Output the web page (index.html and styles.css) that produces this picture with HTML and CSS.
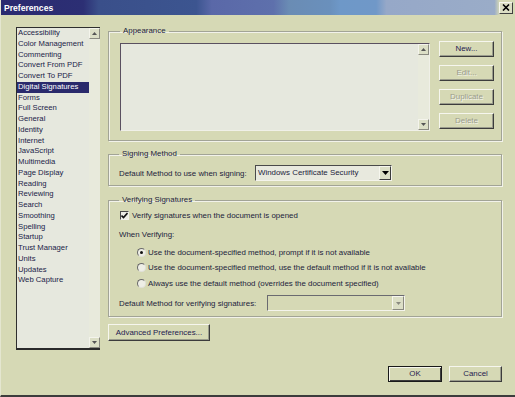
FILE: index.html
```html
<!DOCTYPE html>
<html>
<head>
<meta charset="utf-8">
<title>Preferences</title>
<link rel="stylesheet" href="styles.css">
</head>
<body>
<div class="window">
  <div class="titlebar">
    <span class="title">Preferences</span>
    <span class="close">
      <svg width="8" height="7" viewBox="0 0 8 7"><path d="M1 0.5 L7 6.5 M7 0.5 L1 6.5" stroke="#000" stroke-width="1.6"/></svg>
    </span>
  </div>
  <div class="main">
    <div class="catlist">
      <ul class="items">
        <li>Accessibility</li>
        <li>Color Management</li>
        <li>Commenting</li>
        <li>Convert From PDF</li>
        <li>Convert To PDF</li>
        <li class="selected">Digital Signatures</li>
        <li>Forms</li>
        <li>Full Screen</li>
        <li>General</li>
        <li>Identity</li>
        <li>Internet</li>
        <li>JavaScript</li>
        <li>Multimedia</li>
        <li>Page Display</li>
        <li>Reading</li>
        <li>Reviewing</li>
        <li>Search</li>
        <li>Smoothing</li>
        <li>Spelling</li>
        <li>Startup</li>
        <li>Trust Manager</li>
        <li>Units</li>
        <li>Updates</li>
        <li>Web Capture</li>
      </ul>
      <div class="vscroll">
        <span class="sarrow"><svg width="5" height="3" viewBox="0 0 5 3"><path d="M0 3 L2.5 0 L5 3 Z" fill="#555"/></svg></span>
        <span class="strack"></span>
        <span class="sarrow"><svg width="5" height="3" viewBox="0 0 5 3"><path d="M0 0 L2.5 3 L5 0 Z" fill="#555"/></svg></span>
      </div>
    </div>
    <div class="panel">
      <fieldset class="group appearance">
        <legend>Appearance</legend>
        <div class="app-row">
          <div class="app-list">
            <div class="app-scroll">
              <span class="sarrow"><svg width="5" height="3" viewBox="0 0 5 3"><path d="M0 3 L2.5 0 L5 3 Z" fill="#555"/></svg></span>
              <span class="strack"></span>
              <span class="sarrow"><svg width="5" height="3" viewBox="0 0 5 3"><path d="M0 0 L2.5 3 L5 0 Z" fill="#555"/></svg></span>
            </div>
          </div>
          <div class="app-buttons">
            <button class="btn">New...</button>
            <button class="btn disabled">Edit...</button>
            <button class="btn disabled">Duplicate</button>
            <button class="btn disabled">Delete</button>
          </div>
        </div>
      </fieldset>
      <fieldset class="group signing">
        <legend>Signing Method</legend>
        <div class="field-row">
          <span class="field-label sign-label">Default Method to use when signing:</span>
          <div class="combo sign-combo">
            <span class="combo-text">Windows Certificate Security</span>
            <span class="combo-btn"><svg width="7" height="4" viewBox="0 0 7 4"><path d="M0 0 L7 0 L3.5 4 Z" fill="#000"/></svg></span>
          </div>
        </div>
      </fieldset>
      <fieldset class="group verifying">
        <legend>Verifying Signatures</legend>
        <div class="check-row">
          <span class="checkbox"><svg width="7" height="7" viewBox="0 0 7 7"><path d="M0.5 3.5 L2.5 5.5 L6.5 1" stroke="#111" stroke-width="1.6" fill="none"/></svg></span>
          <span>Verify signatures when the document is opened</span>
        </div>
        <div class="when">When Verifying:</div>
        <div class="radios">
          <div class="radio-row"><span class="radio checked"></span><span>Use the document-specified method, prompt if it is not available</span></div>
          <div class="radio-row"><span class="radio"></span><span>Use the document-specified method, use the default method if it is not available</span></div>
          <div class="radio-row"><span class="radio"></span><span>Always use the default method (overrides the document specified)</span></div>
        </div>
        <div class="field-row verify-row">
          <span class="field-label verify-label">Default Method for verifying signatures:</span>
          <div class="combo verify-combo disabled">
            <span class="combo-text"></span>
            <span class="combo-btn"><svg width="5" height="3" viewBox="0 0 5 3"><path d="M0 0 L5 0 L2.5 3 Z" fill="#8a8a80"/></svg></span>
          </div>
        </div>
      </fieldset>
      <button class="btn adv">Advanced Preferences...</button>
    </div>
  </div>
  <div class="footer">
    <button class="btn ok">OK</button>
    <button class="btn cancel">Cancel</button>
  </div>
</div>
</body>
</html>
```

FILE: styles.css
```css
* { box-sizing: border-box; }

html, body {
  margin: 0;
  padding: 0;
}

body {
  background: #d6d9b5;
  font-family: "Liberation Sans", Arial, sans-serif;
  font-size: 7.9px;
  color: #1c1d3c;
}

.window {
  width: 515px;
  height: 397px;
  overflow: hidden;
  background: #d6d9b5;
  border-bottom: 2px solid #3c3c3c;
  border-left: 1px solid #e4e6d0;
}

.titlebar {
  height: 15px;
  display: flex;
  align-items: center;
  justify-content: space-between;
  padding: 0 2px 0 3px;
  background: linear-gradient(to right, #2a2a70 0%, #2c2f74 16%, #3a4f8a 19%, #3c5590 38%, #5a68a8 41%, #5e70ac 53%, #6a8cb4 56%, #6a90bc 64%, #6e98c8 66%, #7098c8 73%, #96a8c8 75%, #9aacc8 96%, #d6d9b5 97%);
}

.title {
  color: #ffffff;
  font-weight: bold;
  font-size: 8.6px;
}

.close {
  width: 14px;
  height: 12px;
  display: flex;
  align-items: center;
  justify-content: center;
  background: #dcdec4;
  border: 1px solid;
  border-color: #f6f6ee #404040 #404040 #f6f6ee;
}

.main {
  display: flex;
  gap: 8px;
  padding-left: 15px;
  margin-top: 12px;
}

.catlist {
  width: 84px;
  height: 323px;
  display: flex;
  border-top: 1px solid #2e2e2e;
  border-left: 1px solid #2e2e2e;
  border-bottom: 2px solid #2a2a2a;
}

.items {
  list-style: none;
  margin: 0;
  padding: 0;
  flex: 1;
  background: #e6e8de;
  color: #1a1c48;
  font-size: 7.7px;
}

.items li {
  height: 10.75px;
  line-height: 10.75px;
  padding-left: 1px;
  white-space: nowrap;
  overflow: hidden;
}

.items li.selected {
  background: #2a2a6c;
  color: #ffffff;
}

.vscroll, .app-scroll {
  width: 11px;
  display: flex;
  flex-direction: column;
  background-color: #e8eadc;
  background-image: radial-gradient(#c8cab0 0.6px, transparent 0.7px);
  background-size: 2px 2px;
}

.sarrow {
  height: 11px;
  display: flex;
  align-items: center;
  justify-content: center;
  background: #dcdfc6;
  border: 1px solid;
  border-color: #f4f4ec #8a8a80 #8a8a80 #f4f4ec;
}

.strack { flex: 1; }

.panel {
  width: 394px;
  margin-top: -1px;
  display: flex;
  flex-direction: column;
}

.group {
  margin: 0;
  border: 1px solid #a2a496;
  box-shadow: inset 1px 1px 0 #f2f2ea, 1px 1px 0 #f2f2ea;
  min-width: 0;
}

.group legend {
  padding: 0 3px;
  height: 10px;
  line-height: 10px;
  color: #1c1d3c;
}

.appearance {
  padding: 0 7px 9px 11px;
}

.app-row {
  display: flex;
  padding-top: 5px;
}

.app-list {
  width: 310px;
  height: 88px;
  margin-top: 2px;
  display: flex;
  justify-content: flex-end;
  background: #e6e8de;
  border-top: 1px solid #5a5060;
  border-left: 1px solid #5a5060;
  border-right: 1px solid #f0f0e8;
  border-bottom: 1px solid #f0f0e8;
}

.app-buttons {
  margin-left: 9px;
  width: 55px;
  display: flex;
  flex-direction: column;
  gap: 8px;
}

.btn {
  font-family: "Liberation Sans", Arial, sans-serif;
  font-size: 7.9px;
  color: #1f2050;
  background: #d6d9b5;
  border: 1px solid;
  border-color: #f6f6ee #3c3c3c #3c3c3c #f6f6ee;
  box-shadow: inset -1px -1px 0 #9a9c8c;
  height: 16px;
  padding: 0;
  margin: 0;
  line-height: 14px;
}

.btn.disabled {
  color: #9a9c8c;
  text-shadow: 1px 1px 0 #f2f2ea;
}

.signing {
  margin-top: 8px;
  padding: 6px 8px 4px 10px;
}

.field-row {
  display: flex;
  align-items: center;
}

.field-label {
  white-space: nowrap;
}

.sign-label { width: 136px; }

.combo {
  height: 16px;
  display: flex;
  align-items: stretch;
  background: #e8e9de;
  border: 1px solid;
  border-color: #4a4a4a #f4f4ec #f4f4ec #4a4a4a;
}

.sign-combo { width: 137px; }

.combo-text {
  flex: 1;
  padding-left: 2px;
  line-height: 14px;
  white-space: nowrap;
  overflow: hidden;
}

.combo-btn {
  width: 12px;
  display: flex;
  align-items: center;
  justify-content: center;
  background: #dcdfc6;
  border: 1px solid;
  border-color: #f6f6ee #3c3c3c #3c3c3c #f6f6ee;
}

.combo.disabled {
  background: #d6d9b5;
  border-color: #6a6a70 #f4f4ec #f4f4ec #6a6a70;
}

.combo.disabled .combo-btn {
  border-color: #f6f6ee #8a8a80 #8a8a80 #f6f6ee;
}

.verifying {
  margin-top: 9px;
  padding: 5px 8px 5px 10px;
}

.check-row {
  display: flex;
  align-items: center;
  height: 10px;
  gap: 3px;
  padding-left: 1px;
}

.checkbox {
  width: 9px;
  height: 9px;
  display: flex;
  align-items: center;
  justify-content: center;
  background: #eeeee6;
  border: 1px solid;
  border-color: #4a4a4a #f4f4ec #f4f4ec #4a4a4a;
}

.when {
  margin-top: 10px;
  height: 10px;
  line-height: 10px;
}

.radios {
  margin-top: 7px;
  padding-left: 18px;
  display: flex;
  flex-direction: column;
  gap: 5.5px;
}

.radio-row {
  display: flex;
  align-items: center;
  gap: 2px;
  height: 10px;
  white-space: nowrap;
}

.radio {
  width: 9px;
  height: 9px;
  border-radius: 50%;
  background: #eeeee6;
  border: 1px solid #6a6a6a;
  border-right-color: #e0e0d8;
  border-bottom-color: #e0e0d8;
  display: flex;
  align-items: center;
  justify-content: center;
}

.radio.checked::after {
  content: "";
  width: 3px;
  height: 3px;
  border-radius: 50%;
  background: #111;
}

.verify-row {
  margin-top: 7px;
}

.verify-label { width: 148px; }

.verify-combo { width: 138px; }

.adv {
  margin-top: 7px;
  width: 102px;
  height: 17px;
}

.footer {
  display: flex;
  justify-content: flex-end;
  gap: 7px;
  margin-top: 16px;
  padding-right: 13px;
}

.ok {
  width: 54px;
  border: 1px solid #1a1a1a;
  box-shadow: inset 1px 1px 0 #f6f6ee, inset -1px -1px 0 #3c3c3c;
}

.cancel {
  width: 53px;
}
```
